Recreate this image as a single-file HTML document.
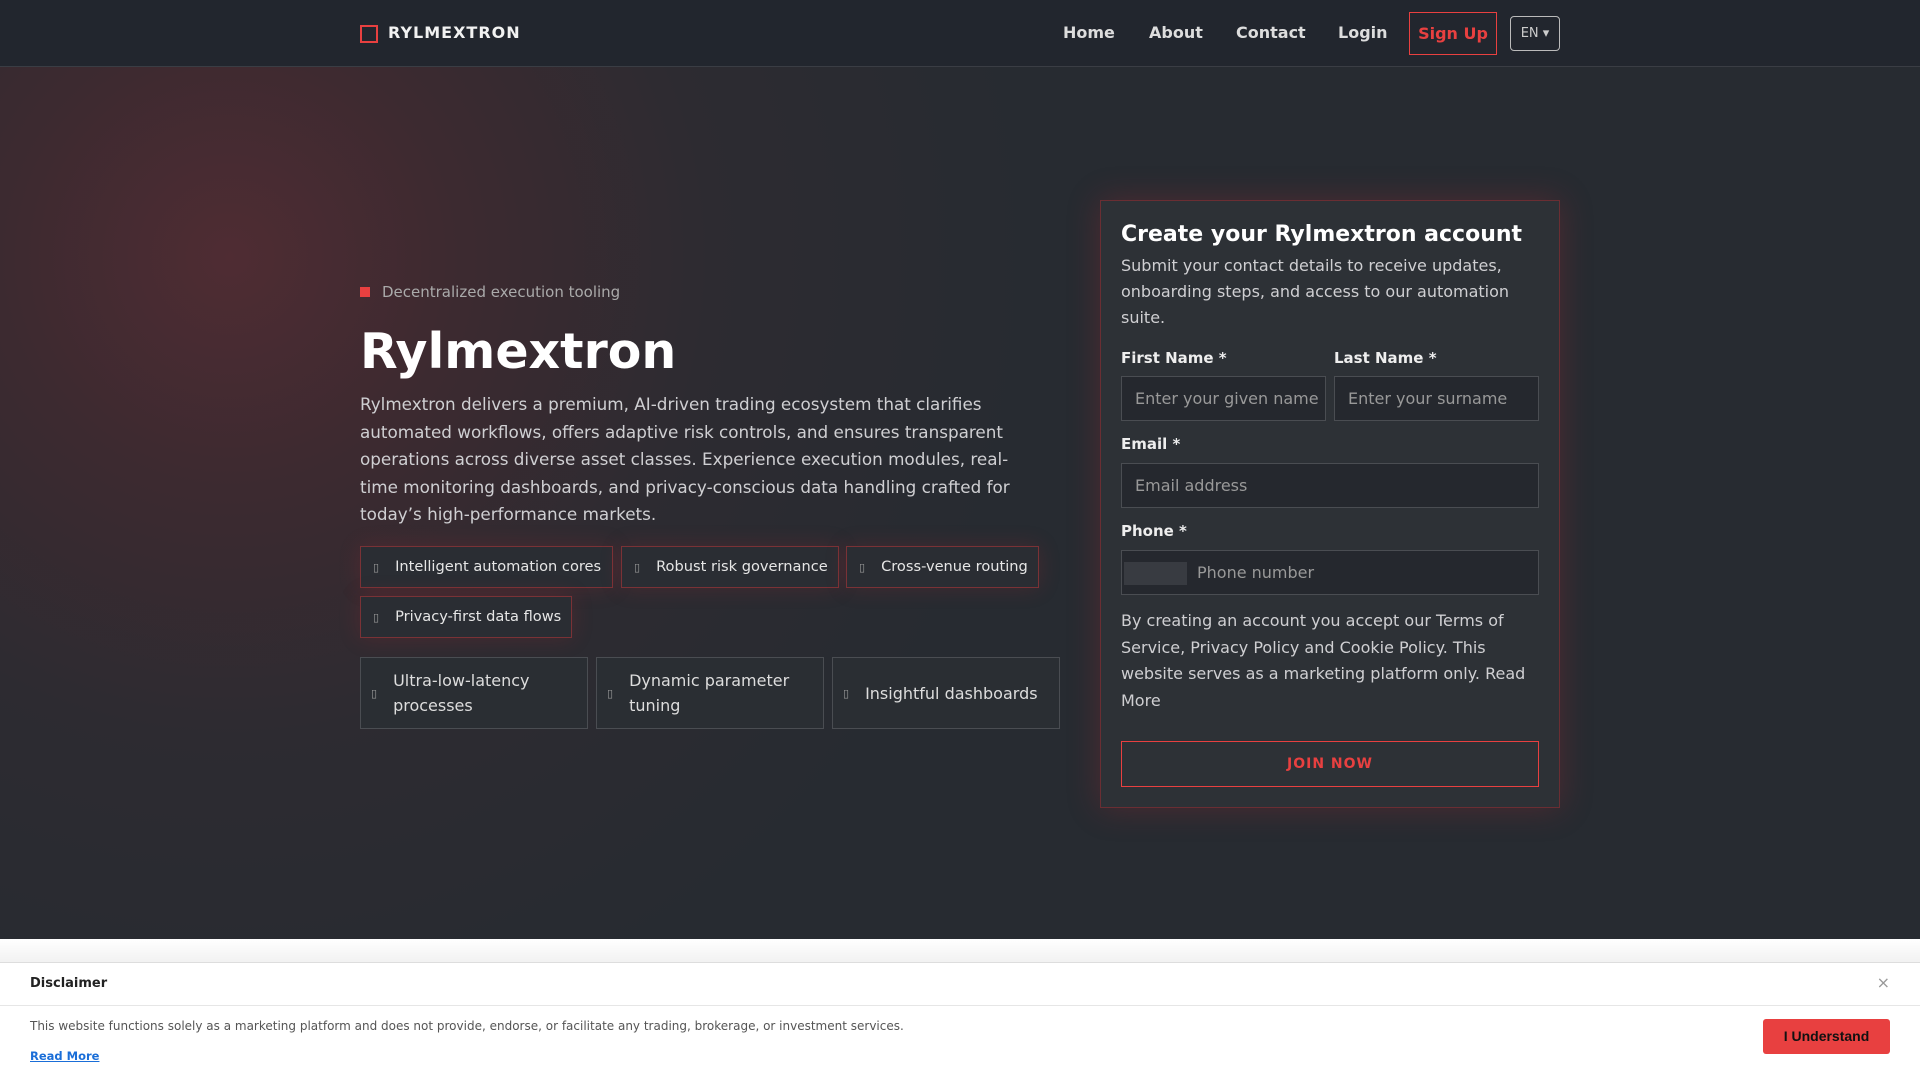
<!DOCTYPE html>
<html><head><meta charset="utf-8"><style>
*{box-sizing:border-box;margin:0;padding:0}
body{width:1920px;height:1080px;overflow:hidden;font-family:"DejaVu Sans","Liberation Sans",sans-serif;background:#272b31;color:#e6e6e6;position:relative}
.nav{position:absolute;left:0;top:0;width:1920px;height:67px;background:#22262e;border-bottom:1px solid #3a3d44}
.logo{position:absolute;left:360px;top:25px;width:18px;height:18px;border:2px solid #e84040}
.brand{position:absolute;left:388px;top:23px;font-weight:bold;font-size:16px;letter-spacing:1px;color:#f2f2f2}
.nl{position:absolute;top:23px;font-size:16px;font-weight:bold;color:#ddd}
.signup{position:absolute;left:1409px;top:12px;width:88px;height:43px;border:1px solid #e84040;color:#e84040;font-weight:bold;font-size:16px;text-align:center;line-height:41px}
.en{position:absolute;left:1510px;top:16px;width:50px;height:35px;border:1px solid #bbb;border-radius:4px;color:#ccc;font-size:13px;text-align:center;line-height:33px}
.hero{position:absolute;left:0;top:67px;width:1920px;height:872px;background:radial-gradient(circle at 230px 190px,#4f2c33 0,#3d2a30 220px,#2d2b31 480px,#272b31 800px),#272b31}
.badge{position:absolute;left:360px;top:283px;font-size:15px;color:#aaa}
.badge i{display:inline-block;width:10px;height:10px;background:#e84040;margin-right:12px}
h1{position:absolute;left:360px;top:323px;font-size:49px;font-weight:bold;color:#fff}
.desc{position:absolute;left:360px;top:391px;width:665px;font-size:16.8px;line-height:27.5px;color:#cfcfd2}
.chip{position:absolute;height:42px;border:1px solid #7a3236;background:#2a2d33;box-shadow:0 0 22px rgba(200,40,50,.18);font-size:14.6px;color:#e6e6e6;line-height:40px;padding-left:12px}
.chip b,.card b{font-weight:normal;color:#999;font-size:11px;margin-right:16px}
.card{position:absolute;top:657px;width:228px;height:72px;border:1px solid #4a4d52;background:#2a2e33;font-size:16px;color:#ddd;display:flex;align-items:center;padding-left:10px;line-height:25px}
.form{position:absolute;left:1100px;top:200px;width:460px;height:608px;border:1px solid #6a2e33;background:#2d3136;box-shadow:0 0 30px rgba(200,40,50,.25);padding:0 20px}
.form h2{position:absolute;left:20px;top:21px;font-size:22px;color:#fff}
.fd{position:absolute;left:20px;top:52px;width:420px;font-size:16px;line-height:26px;color:#cfcfd2}
.lb{position:absolute;font-size:15px;font-weight:bold;color:#eee}
.in{position:absolute;height:45px;border:1px solid #4a4d52;background:#25282e;color:#999;font-size:16px;line-height:43px;padding-left:13px;overflow:hidden;white-space:nowrap}
.terms{position:absolute;left:20px;top:407px;width:420px;font-size:16px;line-height:26.5px;color:#cfcfd2}
.join{position:absolute;left:20px;top:540px;width:418px;height:46px;border:1px solid #e84040;color:#e84040;font-weight:bold;font-size:14px;letter-spacing:1px;text-align:center;line-height:44px}
.shade{position:absolute;left:0;top:939px;width:1920px;height:24px;background:linear-gradient(#fff,#f1f1f1)}
.ban{position:absolute;left:0;top:962px;width:1920px;height:118px;background:#fff;border-top:1px solid #ddd}
.bh{height:43px;border-bottom:1px solid #e6e6e6;padding-left:30px;font-weight:bold;font-size:13px;line-height:42px;color:#222}
.bt{position:absolute;left:30px;top:56px;font-size:12px;color:#555}
.rm{position:absolute;left:30px;top:86px;font-size:11.5px;font-weight:bold;color:#1a6ed8;text-decoration:underline}
.x{position:absolute;right:30px;top:10px;color:#999;font-size:16px}
.iu{position:absolute;left:1763px;top:56px;width:127px;height:35px;background:#e84040;border-radius:3px;font-family:"Liberation Sans",sans-serif;font-weight:bold;font-size:14px;color:#111;text-align:center;line-height:35px}
</style></head><body>
<div class="nav">
<div class="logo"></div><div class="brand">RYLMEXTRON</div>
<div class="nl" style="left:1063px">Home</div>
<div class="nl" style="left:1149px">About</div>
<div class="nl" style="left:1236px">Contact</div>
<div class="nl" style="left:1338px">Login</div>
<div class="signup">Sign Up</div>
<div class="en">EN ▾</div>
</div>
<div class="hero"></div>
<div class="badge"><i></i>Decentralized execution tooling</div>
<h1>Rylmextron</h1>
<div class="desc">Rylmextron delivers a premium, AI-driven trading ecosystem that clarifies automated workflows, offers adaptive risk controls, and ensures transparent operations across diverse asset classes. Experience execution modules, real-time monitoring dashboards, and privacy-conscious data handling crafted for today’s high-performance markets.</div>
<div class="chip" style="left:360px;top:546px;width:253px"><b>▯</b>Intelligent automation cores</div>
<div class="chip" style="left:621px;top:546px;width:218px"><b>▯</b>Robust risk governance</div>
<div class="chip" style="left:846px;top:546px;width:193px"><b>▯</b>Cross-venue routing</div>
<div class="chip" style="left:360px;top:596px;width:212px"><b>▯</b>Privacy-first data flows</div>
<div class="card" style="left:360px"><b>▯</b><span>Ultra-low-latency<br>processes</span></div>
<div class="card" style="left:596px"><b>▯</b><span>Dynamic parameter<br>tuning</span></div>
<div class="card" style="left:832px"><b>▯</b><span>Insightful dashboards</span></div>
<div class="form">
<h2>Create your Rylmextron account</h2>
<div class="fd">Submit your contact details to receive updates, onboarding steps, and access to our automation suite.</div>
<div class="lb" style="left:20px;top:148px">First Name *</div>
<div class="lb" style="left:233px;top:148px">Last Name *</div>
<div class="in" style="left:20px;top:175px;width:205px">Enter your given name</div>
<div class="in" style="left:233px;top:175px;width:205px">Enter your surname</div>
<div class="lb" style="left:20px;top:234px">Email *</div>
<div class="in" style="left:20px;top:262px;width:418px">Email address</div>
<div class="lb" style="left:20px;top:321px">Phone *</div>
<div class="in" style="left:20px;top:349px;width:418px;padding-left:75px"><span style="position:absolute;left:2px;top:11px;width:63px;height:23px;background:#383b41"></span>Phone number</div>
<div class="terms">By creating an account you accept our Terms of Service, Privacy Policy and Cookie Policy. This website serves as a marketing platform only. Read More</div>
<div class="join">JOIN NOW</div>
</div>
<div class="shade"></div>
<div class="ban">
<div class="bh">Disclaimer</div><div class="x">×</div>
<div class="bt">This website functions solely as a marketing platform and does not provide, endorse, or facilitate any trading, brokerage, or investment services.</div>
<div class="rm">Read More</div>
<div class="iu">I Understand</div>
</div>
</body></html>
